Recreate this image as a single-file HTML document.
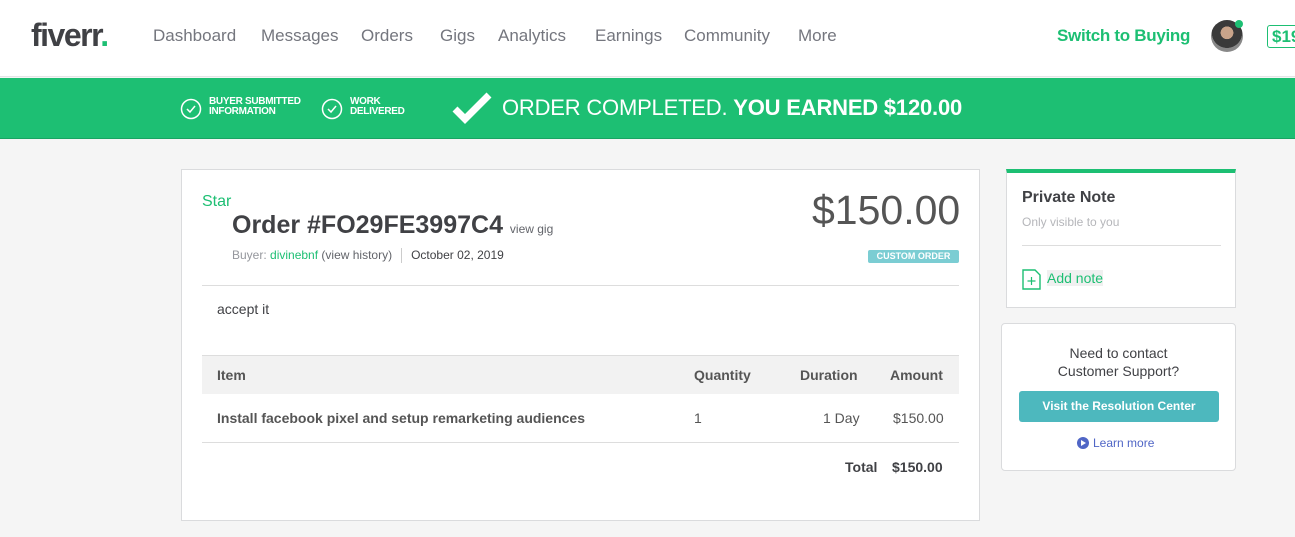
<!DOCTYPE html>
<html><head><style>
*{margin:0;padding:0;box-sizing:border-box}
body{width:1295px;height:537px;overflow:hidden;background:#f5f5f5;font-family:"Liberation Sans",Arial,sans-serif;position:relative;color:#404145}
.abs{position:absolute;white-space:nowrap}
.hdr{position:absolute;left:0;top:0;width:1295px;height:77px;background:#fff;border-bottom:1px solid #e4e5e7}
.nav{font-size:17px;color:#74767e;top:26px}
.band{position:absolute;left:0;top:78px;width:1295px;height:61px;background:#1dbf73;border-bottom:1px solid #19a463}
.card{position:absolute;background:#fff;border:1px solid #dadbdd}
.small{font-size:10px;font-weight:bold;color:#fff;line-height:10px;letter-spacing:-0.3px}
</style></head><body>
<div class="hdr">
<div class="abs" style="left:31px;top:17px;font-size:32px;font-weight:bold;color:#404145;letter-spacing:-1.5px">fiverr<span style="color:#1dbf73">.</span></div>
<div class="abs nav" style="left:153px">Dashboard</div>
<div class="abs nav" style="left:261px">Messages</div>
<div class="abs nav" style="left:361px">Orders</div>
<div class="abs nav" style="left:440px">Gigs</div>
<div class="abs nav" style="left:498px">Analytics</div>
<div class="abs nav" style="left:595px">Earnings</div>
<div class="abs nav" style="left:684px">Community</div>
<div class="abs nav" style="left:798px">More</div>
<div class="abs" style="left:1057px;top:26px;font-size:17px;font-weight:bold;color:#1dbf73;letter-spacing:-0.3px">Switch to Buying</div>
<div class="abs" style="left:1211px;top:20px;width:32px;height:32px;border-radius:50%;background:radial-gradient(circle at 50% 40%,#c9a48a 0 25%,#3a3a3a 26% 60%,#888 61%)"></div>
<div class="abs" style="left:1235px;top:20px;width:8px;height:8px;border-radius:50%;background:#1dbf73"></div>
<div class="abs" style="left:1267px;top:25px;height:23px;width:40px;border:1px solid #1dbf73;border-radius:3px;color:#1dbf73;font-weight:bold;font-size:17px;padding-left:4px;line-height:21px">$19</div>
</div>
<div class="band">
<svg class="abs" style="left:180px;top:20px" width="22" height="22"><circle cx="11" cy="11" r="9.5" fill="none" stroke="#fff" stroke-width="1.5"/><path d="M7 11l3 3 5-6" fill="none" stroke="#fff" stroke-width="1.5"/></svg>
<div class="abs small" style="left:209px;top:19px">BUYER SUBMITTED<br>INFORMATION</div>
<svg class="abs" style="left:321px;top:20px" width="22" height="22"><circle cx="11" cy="11" r="9.5" fill="none" stroke="#fff" stroke-width="1.5"/><path d="M7 11l3 3 5-6" fill="none" stroke="#fff" stroke-width="1.5"/></svg>
<div class="abs small" style="left:350px;top:19px">WORK<br>DELIVERED</div>
<svg class="abs" style="left:452px;top:14px" width="40" height="32"><path d="M3 17l10 10L37 3" fill="none" stroke="#fff" stroke-width="7"/></svg>
<div class="abs" style="left:502px;top:17px;font-size:22px;color:#fff;letter-spacing:-0.2px">ORDER COMPLETED. <b>YOU EARNED $120.00</b></div>
</div>

<div class="card" style="left:181px;top:169px;width:799px;height:352px">
<div class="abs" style="left:20px;top:23px;font-size:16px;color:#1dbf73">Star</div>
<div class="abs" style="left:50px;top:41px;font-size:25px;font-weight:bold;color:#404145">Order #FO29FE3997C4 <span style="font-size:12px;font-weight:normal;color:#62646a">view gig</span></div>
<div class="abs" style="left:50px;top:78px;font-size:12px;color:#95979d">Buyer: <span style="color:#1dbf73">divinebnf</span> <span style="color:#62646a">(view history)</span><span style="display:inline-block;width:1px;height:15px;background:#ccc;vertical-align:middle;margin:0 9px"></span><span style="color:#404145">October 02, 2019</span></div>
<div class="abs" style="left:630px;top:17px;font-size:41px;color:#555;width:147px;text-align:right">$150.00</div>
<div class="abs" style="left:686px;top:80px;width:91px;height:13px;background:#7bcdd3;color:#fff;font-size:9px;font-weight:bold;text-align:center;line-height:13px;border-radius:2px">CUSTOM ORDER</div>
<div class="abs" style="left:20px;top:115px;width:757px;height:1px;background:#ddd"></div>
<div class="abs" style="left:35px;top:131px;font-size:14px;color:#404145">accept it</div>
<div class="abs" style="left:20px;top:185px;width:757px;height:39px;background:#f2f2f2;border-top:1px solid #ddd"></div>
<div class="abs" style="left:35px;top:197px;font-size:14px;font-weight:bold;color:#555">Item</div>
<div class="abs" style="left:512px;top:197px;font-size:14px;font-weight:bold;color:#555">Quantity</div>
<div class="abs" style="left:618px;top:197px;font-size:14px;font-weight:bold;color:#555">Duration</div>
<div class="abs" style="left:708px;top:197px;font-size:14px;font-weight:bold;color:#555">Amount</div>
<div class="abs" style="left:35px;top:240px;font-size:14px;font-weight:bold;color:#555">Install facebook pixel and setup remarketing audiences</div>
<div class="abs" style="left:512px;top:240px;font-size:14px;color:#555">1</div>
<div class="abs" style="left:641px;top:240px;font-size:14px;color:#555">1 Day</div>
<div class="abs" style="left:711px;top:240px;font-size:14px;color:#555">$150.00</div>
<div class="abs" style="left:20px;top:272px;width:757px;height:1px;background:#ddd"></div>
<div class="abs" style="left:663px;top:289px;font-size:14px;font-weight:bold;color:#404145">Total</div>
<div class="abs" style="left:710px;top:289px;font-size:14px;font-weight:bold;color:#404145">$150.00</div>
</div>

<div class="card" style="left:1006px;top:169px;width:230px;height:139px;border-top:4px solid #1dbf73">
<div class="abs" style="left:15px;top:16px;font-size:16px;font-weight:bold;color:#404145">Private Note</div>
<div class="abs" style="left:15px;top:42px;font-size:12px;color:#b5b6ba">Only visible to you</div>
<div class="abs" style="left:15px;top:72px;width:199px;height:1px;background:#ddd"></div>
<svg class="abs" style="left:15px;top:96px" width="20" height="21"><path d="M1 1h12l5 5v14H1z" fill="#fff" stroke="#1dbf73" stroke-width="1.4"/><path d="M9.5 8v8M5.5 12h8" stroke="#1dbf73" stroke-width="1.2"/></svg>
<div class="abs" style="left:40px;top:97px;font-size:14px;color:#1dbf73;background:#f0f0f0">Add note</div>
</div>

<div class="card" style="left:1001px;top:323px;width:235px;height:148px;border-radius:4px">
<div class="abs" style="left:0;top:20px;width:233px;text-align:center;font-size:14px;line-height:18px;color:#404145">Need to contact<br>Customer Support?</div>
<div class="abs" style="left:17px;top:67px;width:200px;height:31px;background:#4db8be;border-radius:3px;color:#fff;font-weight:bold;font-size:12px;text-align:center;line-height:31px">Visit the Resolution Center</div>
<div class="abs" style="left:75px;top:112px;font-size:12px;color:#5066c6"><span style="display:inline-block;width:12px;height:12px;border-radius:50%;background:#5066c6;vertical-align:-2px;margin-right:4px;position:relative"><span style="position:absolute;left:4px;top:3px;border-left:5px solid #fff;border-top:3px solid transparent;border-bottom:3px solid transparent"></span></span>Learn more</div>
</div>
</body></html>
